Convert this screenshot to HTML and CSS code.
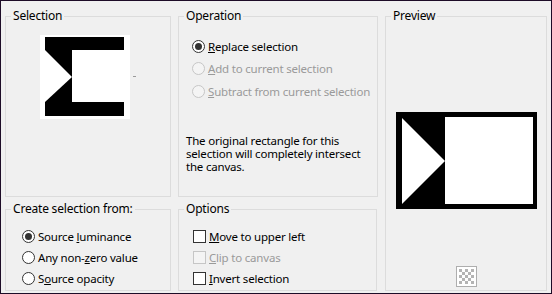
FILE: index.html
```html
<!DOCTYPE html>
<html>
<head>
	<title>Selection from mask</title>
	<link rel="stylesheet" href="styles.css">
</head>
<body>
<div class="frame">
	<fieldset class="group sel-group">
		<legend>Selection</legend>
		<div class="thumb">
			<svg width="90" height="84" viewBox="0 0 90 84">
				<rect x="0" y="0" width="90" height="84" fill="#fff"/>
				<rect x="5" y="2" width="79" height="79" fill="#000"/>
				<polygon points="5,15 32,42 5,67" fill="#fff"/>
				<rect x="32" y="15" width="52" height="52" fill="#fff"/>
			</svg>
			<span class="tick"></span>
		</div>
	</fieldset>

	<fieldset class="group op-group">
		<legend>Operation</legend>
		<div class="options top">
			<label class="row"><input type="radio" name="op" checked><span><u>R</u>eplace selection</span></label>
			<label class="row off"><input type="radio" name="op" disabled><span><u>A</u>dd to current selection</span></label>
			<label class="row off"><input type="radio" name="op" disabled><span><u>S</u>ubtract from current selection</span></label>
		</div>
		<p class="note">The original rectangle for this selection will completely intersect the canvas.</p>
	</fieldset>

	<fieldset class="group preview-group">
		<legend>Preview</legend>
		<div class="preview">
			<svg width="141" height="97" viewBox="0 0 141 97">
				<rect x="0" y="0" width="141" height="97" fill="#000"/>
				<polygon points="6,6 49,49 6,92" fill="#fff"/>
				<rect x="49" y="5" width="88" height="87" fill="#fff"/>
			</svg>
		</div>
		<div class="checker-btn">
			<svg width="21" height="21" viewBox="0 0 21 21">
				<rect x="0.5" y="0.5" width="20" height="20" fill="#fff" stroke="#aeaeae"/>
				<rect x="3" y="3" width="3" height="3" fill="#b4b4b4"/>
				<rect x="9" y="3" width="3" height="3" fill="#b4b4b4"/>
				<rect x="15" y="3" width="3" height="3" fill="#b4b4b4"/>
				<rect x="6" y="6" width="3" height="3" fill="#b4b4b4"/>
				<rect x="12" y="6" width="3" height="3" fill="#b4b4b4"/>
				<rect x="3" y="9" width="3" height="3" fill="#b4b4b4"/>
				<rect x="9" y="9" width="3" height="3" fill="#b4b4b4"/>
				<rect x="15" y="9" width="3" height="3" fill="#b4b4b4"/>
				<rect x="6" y="12" width="3" height="3" fill="#b4b4b4"/>
				<rect x="12" y="12" width="3" height="3" fill="#b4b4b4"/>
				<rect x="3" y="15" width="3" height="3" fill="#b4b4b4"/>
				<rect x="9" y="15" width="3" height="3" fill="#b4b4b4"/>
				<rect x="15" y="15" width="3" height="3" fill="#b4b4b4"/>
			</svg>
		</div>
	</fieldset>

	<fieldset class="group from-group">
		<legend>Create selection from:</legend>
		<div class="options bottom">
			<label class="row"><input type="radio" name="src" checked><span>Source <u>l</u>uminance</span></label>
			<label class="row"><input type="radio" name="src"><span>Any non-<u>z</u>ero value</span></label>
			<label class="row"><input type="radio" name="src"><span>S<u>o</u>urce opacity</span></label>
		</div>
	</fieldset>

	<fieldset class="group opt-group">
		<legend>Options</legend>
		<div class="options bottom">
			<label class="row"><input type="checkbox"><span><u>M</u>ove to upper left</span></label>
			<label class="row off"><input type="checkbox" disabled><span><u>C</u>lip to canvas</span></label>
			<label class="row"><input type="checkbox"><span><u>I</u>nvert selection</span></label>
		</div>
	</fieldset>
</div>
</body>
</html>
```

FILE: styles.css
```css
body{
	margin: 0;
	font-family: "Noto Sans", sans-serif;
	font-size: 11.5px;
	letter-spacing: -0.2px;
	color: #000;
	background: #f0f0f0;
}
.frame{
	width: 552px;
	height: 294px;
	box-sizing: border-box;
	border: 1px solid #1d0c27;
	background: #f0f0f0;
	padding: 7px 3px 2px 4px;
	display: grid;
	grid-template-columns: 166px 199px 163px;
	grid-template-rows: 189px 90px;
	column-gap: 7px;
	row-gap: 4px;
}
.group{
	margin: 0;
	padding: 0;
	border: 1px solid #dcdcdc;
	min-width: 0;
	box-sizing: border-box;
}
.group legend{
	margin-left: 5px;
	padding: 0 2px;
	line-height: 16px;
	height: 16px;
	font-size: 12px;
}
.op-group{
	margin-right: -1px;
}
.preview-group{
	grid-row: 1 / 3;
	grid-column: 3;
	margin-left: 1px;
}

.thumb{
	position: relative;
	margin: 11px 0 0 34px;
	height: 84px;
}
.thumb svg{
	display: block;
}
.tick{
	position: absolute;
	left: 93px;
	top: 41px;
	width: 3px;
	height: 1px;
	background: #9a9a9a;
}

.options.top{
	margin: 11px 0 0 13px;
}
.options.top .row{
	height: 22.5px;
}
.options.bottom{
	margin: 8.5px 0 0 16px;
}
.options.bottom .row{
	height: 21px;
}
.opt-group .options.bottom{
	margin-left: 14px;
}
.row{
	display: flex;
	align-items: center;
	gap: 3px;
	white-space: nowrap;
}
.row.off{
	color: #9a9a9a;
}
.row input{
	appearance: none;
	margin: 0;
	width: 13px;
	height: 13px;
	box-sizing: border-box;
	border: 1px solid #333;
	background: #fff;
	flex: none;
	display: grid;
	place-content: center;
}
.row input[type=radio]{
	border-radius: 50%;
}
.row input[type=radio]:checked::before{
	content: '';
	width: 7px;
	height: 7px;
	border-radius: 50%;
	background: #333;
}
.row input:disabled{
	border-color: #c6c6c6;
	background: #f4f4f4;
}

.note{
	margin: 31px 8px 0 7px;
	line-height: 13px;
}

.preview{
	margin-top: 88px;
	display: flex;
	justify-content: center;
}
.preview svg, .checker-btn svg{
	display: block;
}
.checker-btn{
	margin-top: 57px;
	display: flex;
	justify-content: center;
}
```
